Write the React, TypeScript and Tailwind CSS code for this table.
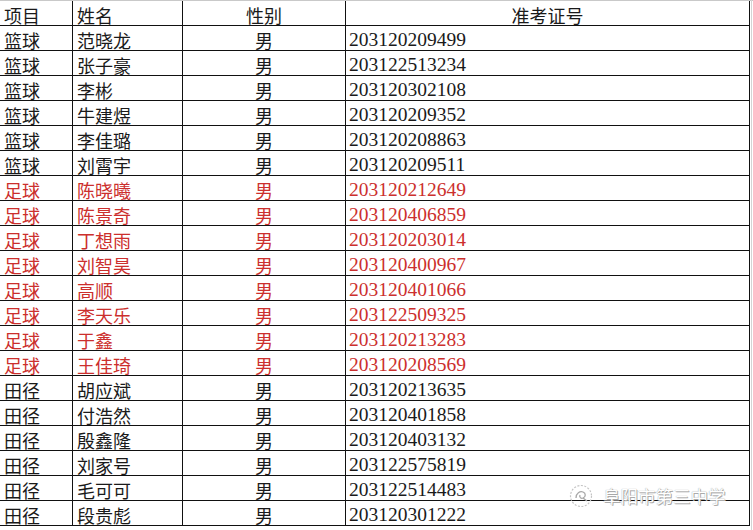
import React from "react";

type Row = [string, string, string];

const rows: Row[] = [
  ["篮球", "范晓龙", "203120209499"],
  ["篮球", "张子豪", "203122513234"],
  ["篮球", "李彬", "203120302108"],
  ["篮球", "牛建煜", "203120209352"],
  ["篮球", "李佳璐", "203120208863"],
  ["篮球", "刘霄宇", "203120209511"],
  ["足球", "陈晓曦", "203120212649"],
  ["足球", "陈景奇", "203120406859"],
  ["足球", "丁想雨", "203120203014"],
  ["足球", "刘智昊", "203120400967"],
  ["足球", "高顺", "203120401066"],
  ["足球", "李天乐", "203122509325"],
  ["足球", "于鑫", "203120213283"],
  ["足球", "王佳琦", "203120208569"],
  ["田径", "胡应斌", "203120213635"],
  ["田径", "付浩然", "203120401858"],
  ["田径", "殷鑫隆", "203120403132"],
  ["田径", "刘家号", "203122575819"],
  ["田径", "毛可可", "203122514483"],
  ["田径", "段贵彪", "203120301222"],
];

const cjk = "font-['Noto_Sans_CJK_SC',sans-serif]";
const num = "font-['Liberation_Serif',serif]";

export default function App() {
  return (
    <div className="relative w-[753px] h-[530px] bg-white overflow-hidden">
      <div className="flex">
        <div className="w-[750px]">
          <div className="h-px bg-[#c9c9c9] w-[753px]" />
          {/* header */}
          <div className={`flex h-[25px] border-b border-[#111] text-[18px] leading-none text-[#1a1a1a] ${cjk}`}>
            <div className="w-[73px] border-r border-[#111] flex items-center pl-[4px] pt-[3px]">项目</div>
            <div className="w-[110px] border-r border-[#111] flex items-center pl-[4px] pt-[3px]">姓名</div>
            <div className="w-[163px] border-r border-[#111] flex items-center justify-center pt-[3px]">性别</div>
            <div className="w-[404px] border-r border-[#111] flex items-center justify-center pt-[3px]">准考证号</div>
          </div>
          {rows.map((r, i) => {
            const red = r[0] === "足球";
            const color = red ? "text-[#cc2f2d]" : "text-[#1a1a1a]";
            return (
              <div key={i} className={`flex h-[25px] border-b border-[#111] ${color} leading-none`}>
                <div className={`w-[73px] border-r border-[#111] flex items-center pl-[4px] pt-[3px] text-[18px] ${cjk}`}>{r[0]}</div>
                <div className={`w-[110px] border-r border-[#111] flex items-center pl-[4px] pt-[3px] text-[18px] ${cjk}`}>{r[1]}</div>
                <div className={`w-[163px] border-r border-[#111] flex items-center justify-center pt-[3px] text-[18px] ${cjk}`}>男</div>
                <div className={`w-[404px] border-r border-[#111] flex items-center pl-[3px] pt-[3px] text-[19.5px] ${num}`}>{r[2]}</div>
              </div>
            );
          })}
        </div>
        <div className="w-[3px] flex">
          <div className="w-px ml-[1px] bg-[#d4d4d4] h-[530px]" />
        </div>
      </div>
      {/* watermark */}
      <div className="absolute left-[567px] top-[484px] flex items-center gap-[8px]">
        <svg width="28" height="24" viewBox="0 0 28 24">
          <g fill="none" stroke="#c4c4c4" strokeWidth="1.2" strokeDasharray="2 1.5">
            <circle cx="14" cy="12" r="10.5" />
          </g>
          <g fill="none" stroke="#a8a8a8" strokeWidth="1.3">
            <path d="M9 14 C9 9 13 7 16 8 C19 9 19 13 16 14 C14 15 12 13 13 11" />
            <path d="M16 14 L20 17" />
          </g>
        </svg>
        <span
          className={`text-[17.5px] leading-none text-white ${cjk} [text-shadow:0_0_1px_#8a8a8a,1px_1px_0_#b0b0b0]`}
        >
          阜阳市第三中学
        </span>
      </div>
    </div>
  );
}
